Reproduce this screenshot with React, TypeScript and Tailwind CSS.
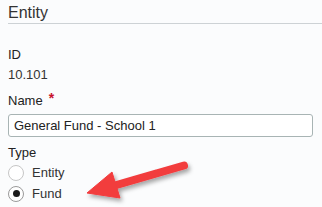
import React from "react";

function Radio({ label, checked }: { label: string; checked?: boolean }) {
  return (
    <label className="flex h-[21px] items-center gap-[8px]">
      <span
        className={`flex h-[16px] w-[16px] items-center justify-center rounded-full border bg-white ${
          checked ? "border-[#9a9a9a]" : "border-[#c6c6c6]"
        }`}
      >
        {checked && <span className="h-[7px] w-[7px] rounded-full bg-[#1a1a1a]" />}
      </span>
      <span className="text-[13px] leading-4 text-[#333]">{label}</span>
    </label>
  );
}

export default function App() {
  return (
    <div className="relative h-[207px] w-[322px] overflow-hidden bg-[#fbfcfd] pl-2 font-['Liberation_Sans',Arial,sans-serif]">
      <h2 className="border-b border-[#cdd2d5] pt-[3px] text-[16px] leading-5 text-[#333]">Entity</h2>

      <div className="mt-[23px] text-[13px] leading-4 text-[#222]">ID</div>
      <div className="mt-[4px] text-[13px] leading-4 text-[#333]">10.101</div>

      <div className="mt-[10px] flex text-[13px] leading-4 text-[#222]">
        Name
        <span className="ml-[6px] -mt-[3px] text-[14px] font-bold text-[#c8102e]">*</span>
      </div>
      <input
        type="text"
        readOnly
        defaultValue="General Fund - School 1"
        className="mt-[5px] block h-[23px] w-[305px] rounded-[3px] border border-[#a8b4b4] bg-white px-[5px] text-[13px] text-[#222] outline-none"
      />

      <div className="mt-[8px] text-[13px] leading-4 text-[#222]">Type</div>
      <div className="mt-[1px] flex flex-col">
        <Radio label="Entity" />
        <Radio label="Fund" checked />
      </div>

      <svg className="pointer-events-none absolute left-0 top-0" width="322" height="207" viewBox="0 0 322 207">
        <defs>
          <filter id="sh" x="-20%" y="-20%" width="140%" height="160%">
            <feDropShadow dx="2" dy="3" stdDeviation="2" floodColor="#000" floodOpacity="0.35" />
          </filter>
        </defs>
        <g filter="url(#sh)" fill="#f23c3e" stroke="#f23c3e">
          <line x1="184" y1="165.5" x2="113" y2="186" strokeWidth="8" strokeLinecap="round" />
          <polygon points="87,193 112,172 120,198" strokeWidth="1" strokeLinejoin="round" />
        </g>
      </svg>
    </div>
  );
}
